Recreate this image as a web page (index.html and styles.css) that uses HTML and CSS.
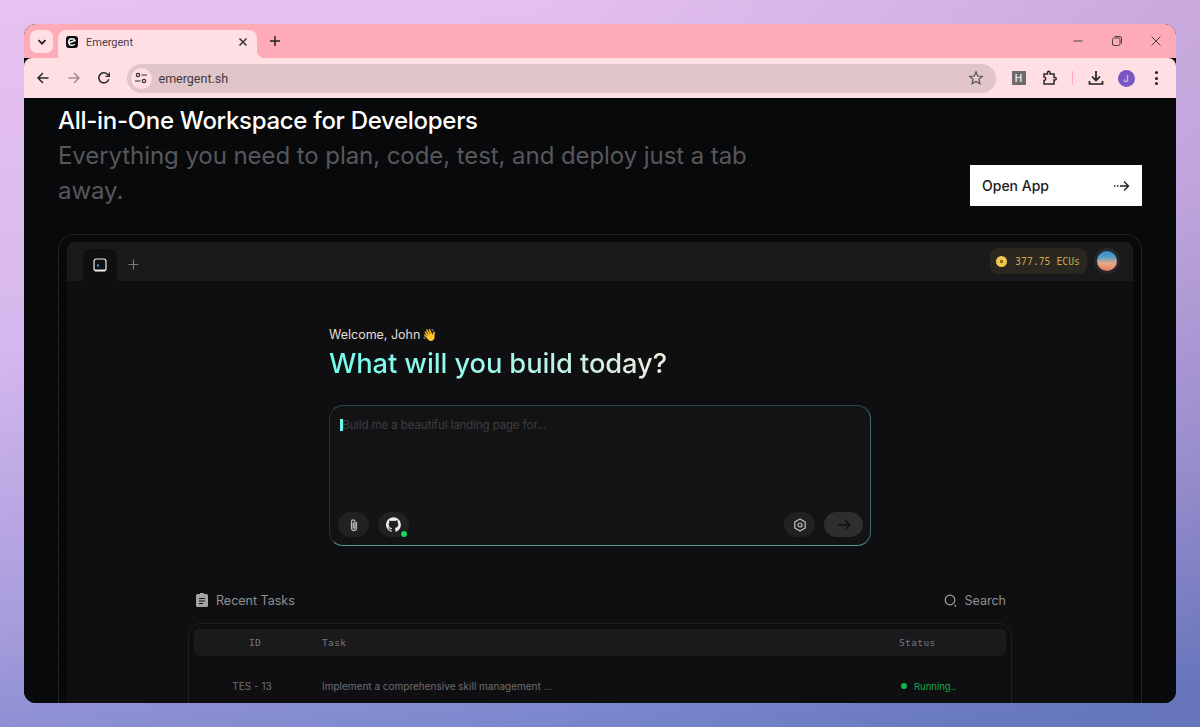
FILE: index.html
```html
<!DOCTYPE html>
<html lang="en">
<head>
    <meta charset="UTF-8">
    <meta name="viewport" content="width=device-width, initial-scale=1.0">
    <title>Emergent</title>
    <link rel="stylesheet" href="styles.css">
</head>
<body>
    <div class="browser">
        <div class="tabstrip">
            <button class="tab-menu">
                <svg width="12" height="12" viewBox="0 0 12 12" fill="none" stroke="#222" stroke-width="1.7"><path d="M2.5 4.2 6 7.7l3.5-3.5"/></svg>
            </button>
            <div class="tab">
                <span class="favicon">
                    <svg width="12" height="12" viewBox="0 0 12 12" fill="none" stroke="#fff" stroke-width="1.4"><path d="M2.6 7 9 4.6C8.4 3.2 7.3 2.7 6 2.7 4 2.7 2.7 4 2.7 6S4 9.3 6 9.3c1.200 0 2.100-.4 2.800-1.200"/></svg>
                </span>
                <span class="tab-title">Emergent</span>
                <svg class="tab-close" width="10" height="10" viewBox="0 0 10 10" stroke="#333" stroke-width="1.500"><path d="M1.500 1.500l7 7M8.500 1.500l-7 7"/></svg>
            </div>
            <svg class="new-tab" width="12" height="12" viewBox="0 0 12 12" stroke="#222" stroke-width="1.500"><path d="M6 1v10M1 6h10"/></svg>
            <div class="win-controls">
                <svg width="12" height="12" viewBox="0 0 12 12" stroke="#444" stroke-width="1"><path d="M1.500 6h9"/></svg>
                <svg width="12" height="12" viewBox="0 0 12 12" fill="none" stroke="#444" stroke-width="1"><rect x="1.500" y="3" width="7.500" height="7.500" rx="1.500"/><path d="M3.500 1.500h5.500a1.500 1.500 0 0 1 1.500 1.500v5.500"/></svg>
                <svg width="12" height="12" viewBox="0 0 12 12" stroke="#444" stroke-width="1"><path d="M1.500 1.500l9 9M10.500 1.500l-9 9"/></svg>
            </div>
        </div>
        <div class="toolbar">
            <svg class="nav" width="14" height="14" viewBox="0 0 14 14" fill="none" stroke="#2b2b2b" stroke-width="1.500"><path d="M12.500 7H2M7 2 2 7l5 5"/></svg>
            <svg class="nav" width="14" height="14" viewBox="0 0 14 14" fill="none" stroke="#a08e92" stroke-width="1.500"><path d="M1.500 7H12M7 2l5 5-5 5"/></svg>
            <svg class="nav" width="14" height="14" viewBox="0 0 14 14" fill="none" stroke="#2b2b2b" stroke-width="1.500"><path d="M11.700 8.200A5 5 0 1 1 10.600 3.500L12 5"/><path d="M12.300 1.500v3.800H8.500" stroke-width="1.300"/></svg>
            <div class="omnibox">
                <span class="site-info">
                    <svg width="14" height="14" viewBox="0 0 14 14" fill="none" stroke="#333" stroke-width="1.200"><circle cx="4" cy="4" r="1.700"/><path d="M7.500 4H13M1 10h5.500"/><circle cx="10" cy="10" r="1.700"/></svg>
                </span>
                <span class="url">emergent.sh</span>
                <svg class="star" width="16" height="16" viewBox="0 0 16 16" fill="none" stroke="#555" stroke-width="1.200"><path d="M8 1.800 9.800 6l4.500.4-3.400 3 1 4.400L8 11.500l-3.900 2.300 1-4.400-3.400-3L6.200 6z"/></svg>
            </div>
            <span class="ext-h">H</span>
            <svg class="ext" width="16" height="16" viewBox="0 0 16 16" fill="none" stroke="#2b2b2b" stroke-width="1.500"><path d="M2 4h3.500V2.500a1.200 1.200 0 0 1 2.500 0V4h4v3.500h1a1.200 1.200 0 0 1 0 2.500h-1v4H2v-3.500a1.700 1.700 0 0 0 0-3.500z"/></svg>
            <span class="divider"></span>
            <svg class="download" width="16" height="16" viewBox="0 0 16 16" fill="none" stroke="#222" stroke-width="1.700"><path d="M8 1v9M4 6.500 8 10.500l4-4M1.500 11v3h13v-3"/></svg>
            <span class="avatar">J</span>
            <span class="kebab"><i></i><i></i><i></i></span>
        </div>
        <main class="page">
            <section class="hero">
                <div class="hero-text">
                    <h1>All-in-One Workspace for Developers</h1>
                    <p>Everything you need to plan, code, test, and deploy just a tab away.</p>
                </div>
                <a class="open-app">
                    <span>Open App</span>
                    <svg width="16" height="12" viewBox="0 0 16 12" fill="none" stroke="#222" stroke-width="1.400"><path d="M0 6h1.500M3 6h1.500M6 6h8.500M10 1.500 14.500 6 10 10.500"/></svg>
                </a>
            </section>
            <section class="frame">
                <div class="app">
                    <div class="app-bar">
                        <div class="app-tab">
                            <svg width="14" height="14" viewBox="0 0 14 14" fill="none"><rect x="1" y="1" width="12" height="12" rx="2.500" stroke="#eee" stroke-width="1.200"/><path d="M2 12.300h10" stroke="#eee" stroke-width="1.500"/><rect x="4" y="6.500" width="2" height="2" fill="#1ea7e8"/></svg>
                        </div>
                        <svg class="app-plus" width="11" height="11" viewBox="0 0 11 11" stroke="#77777b" stroke-width="1.200"><path d="M5.500 .5v10M.5 5.500h10"/></svg>
                        <div class="ecus">
                            <span class="coin"></span>
                            <span>377.75 ECUs</span>
                        </div>
                        <span class="orb"></span>
                    </div>
                    <div class="app-body">
                        <div class="prompt">
                            <div class="welcome">Welcome, John<span class="wave">👋</span></div>
                            <h2>What will you build today?</h2>
                            <div class="prompt-box">
                                <div class="prompt-input"><span class="caret"></span><span class="placeholder">Build me a beautiful landing page for...</span></div>
                                <div class="prompt-actions">
                                    <span class="round">
                                        <svg width="14" height="14" viewBox="0 0 14 14" fill="none" stroke="#b5b5b8" stroke-width="1.300"><path d="M9.500 4v6a2.500 2.500 0 0 1-5 0V3.500a1.700 1.700 0 0 1 3.400 0V9.500a.8.8 0 0 1-1.600 0V4.500"/></svg>
                                    </span>
                                    <span class="round github">
                                        <svg width="15" height="15" viewBox="0 0 16 16" fill="#eee"><path d="M8 .2a8 8 0 0 0-2.500 15.600c.4.100.5-.2.500-.4v-1.400c-2.200.5-2.700-1-2.700-1-.4-.9-.9-1.200-.9-1.200-.7-.5.100-.5.100-.5.800.1 1.200.8 1.200.8.700 1.200 1.900.9 2.300.7.100-.5.300-.9.500-1.100-1.800-.2-3.600-.9-3.600-4 0-.9.300-1.600.8-2.100-.1-.2-.4-1 .1-2.100 0 0 .7-.2 2.200.8a7.600 7.600 0 0 1 4 0c1.500-1 2.200-.8 2.200-.8.400 1.100.2 1.900.1 2.100.5.600.8 1.300.8 2.100 0 3.100-1.900 3.700-3.700 3.900.3.300.6.800.6 1.500v2.200c0 .2.100.5.600.4A8 8 0 0 0 8 .2z"/></svg>
                                        <i class="dot"></i>
                                    </span>
                                    <span class="round push">
                                        <svg width="14" height="14" viewBox="0 0 14 14" fill="none" stroke="#c4c4c6" stroke-width="1.200" stroke-linejoin="round"><path d="M7 1 12.200 4v6L7 13 1.800 10V4z"/><circle cx="7" cy="7" r="2"/></svg>
                                    </span>
                                    <span class="send">
                                        <svg width="14" height="14" viewBox="0 0 14 14" fill="none" stroke="#111" stroke-width="1.500"><path d="M1 7h12M8 2l5 5-5 5"/></svg>
                                    </span>
                                </div>
                            </div>
                        </div>
                        <div class="tasks">
                            <div class="tasks-head">
                                <div class="tasks-title">
                                    <svg width="12" height="14" viewBox="0 0 12 14" fill="#a3a3a6"><path d="M4 0h4v1h2.500A1.500 1.500 0 0 1 12 2.500v10a1.500 1.500 0 0 1-1.500 1.500h-9A1.500 1.500 0 0 1 0 12.500v-10A1.500 1.500 0 0 1 1.500 1H4z"/><path d="M3 5h6v1H3zM3 7.500h6v1H3zM3 10h4v1H3z" fill="#0f0f11"/></svg>
                                    <span>Recent Tasks</span>
                                </div>
                                <div class="tasks-search">
                                    <svg width="13" height="13" viewBox="0 0 13 13" fill="none" stroke="#a3a3a6" stroke-width="1.200"><circle cx="6" cy="6" r="4.800"/><path d="M10.500 11 12 12.500"/></svg>
                                    <span>Search</span>
                                </div>
                            </div>
                            <div class="table">
                                <div class="row row-head">
                                    <span class="col-id">ID</span>
                                    <span class="col-task">Task</span>
                                    <span class="col-status">Status</span>
                                </div>
                                <div class="row row-body">
                                    <span class="col-id">TES - 13</span>
                                    <span class="col-task">Implement a comprehensive skill management ...</span>
                                    <span class="col-status running"><i></i>Running..</span>
                                </div>
                            </div>
                        </div>
                    </div>
                </div>
            </section>
        </main>
    </div>
</body>
</html>
```

FILE: styles.css
```css
* {
    margin: 0;
    padding: 0;
    box-sizing: border-box;
}

body {
    height: 727px;
    padding: 24px;
    overflow: hidden;
    background:
        linear-gradient(90deg, transparent 45%, rgba(70, 50, 110, 0.14) 100%),
        linear-gradient(172deg, #e8c2f0 0%, #d6b8ee 38%, #a79cdc 70%, #6b80c8 96%);
    font-family: 'Inter', 'Liberation Sans', sans-serif;
}

svg {
    display: block;
    flex: none;
}

/* browser chrome */
.browser {
    height: 679px;
    border-radius: 12px;
    overflow: hidden;
    display: flex;
    flex-direction: column;
    background: #08090b;
}

.tabstrip {
    height: 34px;
    flex: none;
    display: flex;
    align-items: flex-start;
    padding: 6px 0 0 6px;
    background: #ffabb7;
}

.tab-menu {
    width: 23px;
    height: 23px;
    border: none;
    border-radius: 7px;
    background: #ffdfe4;
    display: flex;
    align-items: center;
    justify-content: center;
}

.tab {
    width: 199px;
    height: 28px;
    margin-left: 5px;
    padding: 0 9px 4px 8px;
    display: flex;
    align-items: center;
    border-radius: 8px 8px 0 0;
    background: #ffdfe4;
    position: relative;
}

/* flared foot on the right of the active tab */
.tab::after {
    content: '';
    position: absolute;
    right: -8px;
    bottom: 0;
    width: 8px;
    height: 8px;
    background: radial-gradient(circle at 100% 0, transparent 8px, #ffdfe4 8.5px);
}

.favicon {
    width: 12px;
    height: 12px;
    border-radius: 3px;
    background: #0b0b0f;
    display: flex;
    align-items: center;
    justify-content: center;
}

.tab-title {
    margin-left: 8px;
    flex: 1;
    font-family: 'Roboto', sans-serif;
    font-size: 11px;
    color: #4a4347;
}

.new-tab {
    margin: 5px 0 0 12px;
}

.win-controls {
    margin: 5px 14px 0 auto;
    display: flex;
    gap: 27px;
}

.toolbar {
    height: 40px;
    flex: none;
    display: flex;
    align-items: center;
    padding: 0 12px 0 12px;
    background: #ffdfe4;
    border-radius: 8px 8px 0 0;
}

.nav {
    margin-right: 16.5px;
}

.omnibox {
    width: 869px;
    height: 29px;
    margin-left: -1px;
    padding: 0 12px 0 4px;
    display: flex;
    align-items: center;
    border-radius: 15px;
    background: #e0c5c9;
}

.site-info {
    width: 21px;
    height: 21px;
    border-radius: 50%;
    background: #ffdfe4;
    display: flex;
    align-items: center;
    justify-content: center;
}

.url {
    margin-left: 7px;
    flex: 1;
    font-family: 'Roboto', sans-serif;
    font-size: 12.5px;
    color: #3f393c;
}

.ext-h {
    width: 14px;
    height: 14px;
    margin-left: 16px;
    background: #6d6b6b;
    color: #e8e8e8;
    font-size: 10px;
    font-weight: 600;
    line-height: 14px;
    text-align: center;
}

.ext {
    margin-left: 16px;
}

.divider {
    width: 1px;
    height: 14px;
    margin-left: 14px;
    background: #ffabb7;
}

.download {
    margin-left: 15px;
}

.avatar {
    width: 17px;
    height: 17px;
    margin-left: 14px;
    border-radius: 50%;
    background: #7a58c4;
    color: #e4dcf5;
    font-size: 9px;
    line-height: 17px;
    text-align: center;
}

.kebab {
    margin-left: 20px;
    display: flex;
    flex-direction: column;
    gap: 2.500px;
}

.kebab i {
    width: 3px;
    height: 3px;
    border-radius: 50%;
    background: #222;
}

/* landing page */
.page {
    flex: 1;
    padding: 8px 34px 0;
    overflow: hidden;
    background-color: #08090b;
    background-image: radial-gradient(circle, #1a1b1e 0.7px, transparent 1px);
    background-size: 15px 15px;
}

.hero {
    height: 128px;
    display: flex;
    justify-content: space-between;
}

.hero-text {
    width: 700px;
}

.hero h1 {
    font-size: 24px;
    line-height: 30px;
    font-weight: 500;
    letter-spacing: -0.3px;
    color: #fff;
}

.hero p {
    margin-top: 2px;
    font-size: 24px;
    line-height: 35px;
    letter-spacing: -0.07px;
    color: #57575b;
}

.open-app {
    width: 172px;
    height: 41px;
    margin-top: 59px;
    padding: 0 12px;
    display: flex;
    align-items: center;
    justify-content: space-between;
    background: #fff;
    color: #1b1b1d;
    font-size: 14px;
    font-weight: 500;
}

.frame {
    height: 480px;
    padding: 7px 8px 0;
    border: 1px solid #222326;
    border-bottom: none;
    border-radius: 16px 16px 0 0;
}

.app {
    height: 100%;
    display: flex;
    flex-direction: column;
    border-radius: 8px 8px 0 0;
    overflow: hidden;
}

.app-bar {
    height: 39px;
    flex: none;
    display: flex;
    align-items: flex-end;
    padding: 0 16px;
    background: #1a1a1c;
}

.app-tab {
    width: 34px;
    height: 32px;
    display: flex;
    align-items: center;
    justify-content: center;
    border-radius: 8px 8px 0 0;
    background: #0f0f11;
}

.app-plus {
    margin: 0 0 11px 11px;
}

.ecus {
    height: 26px;
    margin: 0 0 7px auto;
    padding: 0 7px 0 6.5px;
    display: flex;
    align-items: center;
    gap: 8px;
    border-radius: 8px;
    background: #2a2620;
    color: #c9a949;
    font-family: 'DejaVu Sans Mono', monospace;
    font-size: 9.800px;
}

.coin {
    width: 11px;
    height: 11px;
    border-radius: 50%;
    background: radial-gradient(circle, #8a6c1c 0 1.500px, #f3c94f 2px);
}

.orb {
    width: 20px;
    height: 20px;
    margin: 0 0 10px 10px;
    border-radius: 50%;
    background: linear-gradient(180deg, #2f8fc8 0%, #4d9ccb 28%, #e8a987 62%, #e87d5e 100%);
    box-shadow: 0 0 0 3px #26272b;
}

.app-body {
    flex: 1;
    background-color: #0f0f11;
    background-image: radial-gradient(circle, #1a1b1e 0.7px, transparent 1px);
    background-size: 15px 15px;
}

.prompt {
    width: 542px;
    margin: 46px 0 0 262px;
}

.welcome {
    font-size: 12.500px;
    line-height: 16px;
    color: #e4dcd6;
}

.wave {
    margin-left: 2px;
    font-size: 12px;
    line-height: 1;
}

.prompt h2 {
    margin-top: 3px;
    font-size: 27.300px;
    line-height: 36px;
    font-weight: 500;
    letter-spacing: -0.1px;
    background: linear-gradient(90deg, #70fff0 0%, #a3f7ec 50%, #f0ebdc 100%);
    width: 338px;
    white-space: nowrap;
    -webkit-background-clip: text;
    background-clip: text;
    color: transparent;
}

.prompt-box {
    height: 141px;
    margin-top: 23px;
    padding: 0 7px 8px 8px;
    display: flex;
    flex-direction: column;
    border: 1px solid #2a2c2e;
    border-top-color: #2f4a4a;
    border-bottom-color: #4f9c8f;
    border-right-color: #3b6e68;
    border-radius: 14px;
    background: #131315;
}

.prompt-input {
    flex: 1;
    padding-top: 12px;
    display: flex;
    font-size: 11.500px;
    line-height: 14px;
    letter-spacing: -0.1px;
    color: #3e3e42;
}

.caret {
    width: 3px;
    height: 12px;
    margin: 1px -1px 0 2px;
    background: #6ff5e6;
    flex: none;
    position: relative;
}

.prompt-actions {
    display: flex;
    align-items: center;
    gap: 9px;
}

.round {
    width: 31px;
    height: 25px;
    display: flex;
    align-items: center;
    justify-content: center;
    border-radius: 13px;
    background: #212123;
    position: relative;
}

.github .dot {
    position: absolute;
    right: 2px;
    bottom: 0;
    width: 6px;
    height: 6px;
    border-radius: 50%;
    background: #1fd45f;
    box-shadow: 0 0 0 1px #131315;
}

.push {
    margin-left: auto;
}

.send {
    width: 39px;
    height: 25px;
    display: flex;
    align-items: center;
    justify-content: center;
    border-radius: 13px;
    background: #2e2e30;
}

.tasks {
    margin: 43px 121px 0;
}

.tasks-head {
    height: 22px;
    padding: 0 6px 0 8px;
    display: flex;
    align-items: center;
    justify-content: space-between;
    color: #8f8f93;
    font-size: 12.500px;
}

.tasks-title,
.tasks-search {
    display: flex;
    align-items: center;
    gap: 8px;
}

.table {
    height: 100px;
    margin-top: 12px;
    padding: 5px;
    border: 1px solid #1e1f21;
    border-radius: 12px;
    font-size: 10px;
    color: #6d6d71;
}

.row {
    display: flex;
    align-items: center;
}

.row-head {
    height: 27px;
    border-radius: 5px;
    background: #1a1a1c;
    font-family: 'DejaVu Sans Mono', monospace;
    font-size: 9.500px;
    letter-spacing: 0.4px;
    color: #77777b;
}

.row-head .col-id {
    padding-right: 6px;
}

.row-body {
    height: 60px;
}

.row-body .col-id {
    padding-right: 12px;
}

.col-id {
    width: 128px;
    text-align: center;
}

.col-task {
    flex: 1;
}

.col-status {
    width: 107px;
}

.running {
    display: flex;
    align-items: center;
    gap: 7px;
    padding-left: 2px;
    font-size: 9.500px;
    color: #0fa84a;
}

.running i {
    width: 6px;
    height: 6px;
    border-radius: 50%;
    background: #11b84f;
}
```
